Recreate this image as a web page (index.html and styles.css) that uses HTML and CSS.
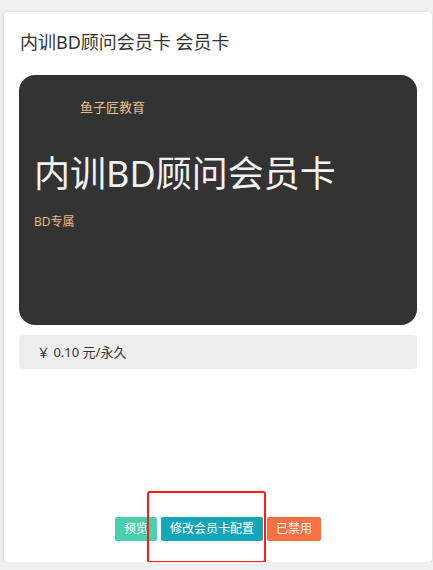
FILE: index.html
```html
<!DOCTYPE html>
<html lang="zh">
<head>
    <meta charset="utf-8">
    <meta name="viewport" content="width=device-width, initial-scale=1">
    <title>会员卡</title>
    <link rel="stylesheet" href="styles.css">
</head>
<body>

<div class="panel">
    <h2 class="panel-title">内训BD顾问会员卡 会员卡</h2>

    <div class="vip-card">
        <div class="vip-org">鱼子匠教育</div>
        <div class="vip-name">内训BD顾问会员卡</div>
        <div class="vip-tag">BD专属</div>
    </div>

    <div class="price">￥ 0.10 元/永久</div>

    <div class="actions">
        <button class="btn btn-preview">预览</button>
        <button class="btn btn-edit">修改会员卡配置</button>
        <button class="btn btn-disabled">已禁用</button>
    </div>

    <div class="highlight"></div>
</div>

</body>
</html>
```

FILE: styles.css
```css
body {
    margin: 0;
    background: #f0f0f0;
    font-family: "Noto Sans", "Noto Sans CJK SC", sans-serif;
    color: #333;
}

.panel {
    position: relative;
    box-sizing: border-box;
    width: 428px;
    height: 550px;
    margin: 12px 0 0 4px;
    padding: 0 15px 21px;
    background: #fff;
    border-radius: 4px;
    box-shadow: 0 1px 4px rgba(0, 0, 0, 0.15);
    display: flex;
    flex-direction: column;
}

.panel-title {
    margin: 18px 0 21px 1px;
    font-size: 18px;
    font-weight: normal;
    line-height: 24px;
    color: #333;
}

.vip-card {
    height: 250px;
    box-sizing: border-box;
    padding: 22px 0 0 17px;
    background: #333;
    border-radius: 16px;
    color: #fff;
}

.vip-org {
    padding-left: 44px;
    font-size: 13px;
    line-height: 20px;
    color: #e8c08e;
}

.vip-name {
    margin: 33px 0 0 -2px;
    font-size: 36px;
    line-height: 48px;
    color: #f2f2f2;
}

.vip-tag {
    margin-top: 15px;
    margin-left: -2px;
    font-size: 12px;
    line-height: 18px;
    color: #e8b88a;
}

.price {
    margin-top: 10px;
    height: 34px;
    line-height: 34px;
    padding-left: 18px;
    background: #ededed;
    border-radius: 4px;
    font-size: 13px;
    color: #333;
}

.actions {
    margin-top: auto;
    display: flex;
    justify-content: center;
    gap: 4px;
}

.btn {
    height: 24px;
    padding: 0 9px;
    border: 0;
    border-radius: 2px;
    font-family: inherit;
    font-size: 12px;
    line-height: 24px;
    color: #fff;
    cursor: pointer;
}

.btn-preview {
    background: #48d0ad;
}

.btn-edit {
    background: #15a6b9;
}

.btn-disabled {
    background: #ff7043;
}

.highlight {
    position: absolute;
    left: 143px;
    top: 479px;
    width: 115px;
    height: 68px;
    border: 2px solid #ff1a1a;
    border-radius: 3px;
}
```
